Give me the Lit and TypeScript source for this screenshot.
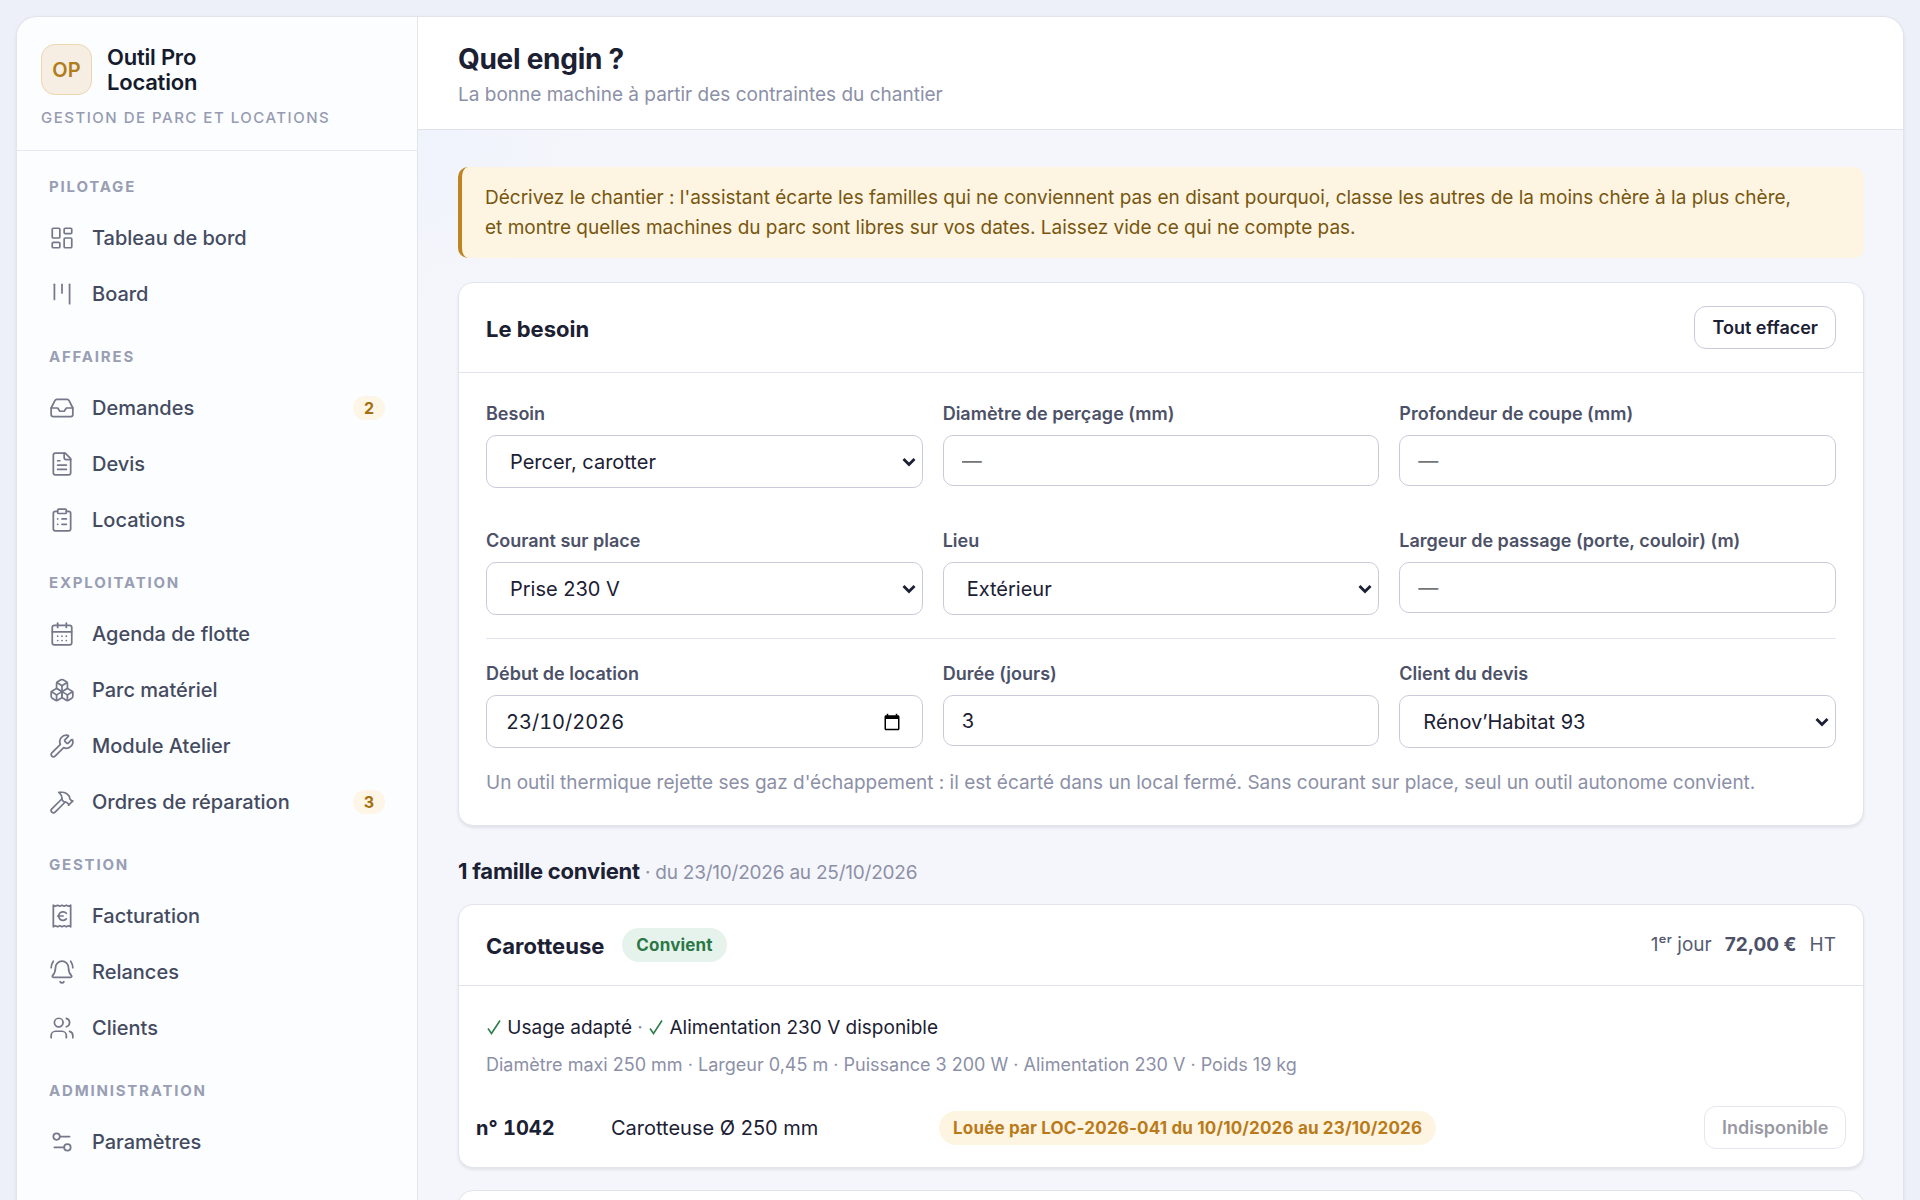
import { LitElement, html, css, svg } from "lit";
import { customElement, property } from "lit/decorators.js";

const ICONS: Record<string, unknown> = {
  dashboard: svg`<rect width="7" height="9" x="3" y="3" rx="1"/><rect width="7" height="5" x="14" y="3" rx="1"/><rect width="7" height="9" x="14" y="12" rx="1"/><rect width="7" height="5" x="3" y="16" rx="1"/>`,
  board: svg`<path d="M5 3v14"/><path d="M12 3v8"/><path d="M19 3v18"/>`,
  inbox: svg`<polyline points="22 12 16 12 14 15 10 15 8 12 2 12"/><path d="M5.45 5.11 2 12v6a2 2 0 0 0 2 2h16a2 2 0 0 0 2-2v-6l-3.45-6.89A2 2 0 0 0 16.76 4H7.24a2 2 0 0 0-1.79 1.11z"/>`,
  file: svg`<path d="M15 2H6a2 2 0 0 0-2 2v16a2 2 0 0 0 2 2h12a2 2 0 0 0 2-2V7Z"/><path d="M14 2v4a2 2 0 0 0 2 2h4"/><path d="M10 9H8"/><path d="M16 13H8"/><path d="M16 17H8"/>`,
  clipboard: svg`<rect width="8" height="4" x="8" y="2" rx="1"/><path d="M16 4h2a2 2 0 0 1 2 2v14a2 2 0 0 1-2 2H6a2 2 0 0 1-2-2V6a2 2 0 0 1 2-2h2"/><path d="M12 11h4"/><path d="M12 16h4"/><path d="M8 11h.01"/><path d="M8 16h.01"/>`,
  calendar: svg`<path d="M8 2v4"/><path d="M16 2v4"/><rect width="18" height="18" x="3" y="4" rx="2"/><path d="M3 10h18"/><path d="M8 14h.01"/><path d="M12 14h.01"/><path d="M16 14h.01"/><path d="M8 18h.01"/><path d="M12 18h.01"/><path d="M16 18h.01"/>`,
  boxes: svg`<path d="M2.97 12.92A2 2 0 0 0 2 14.63v3.24a2 2 0 0 0 .97 1.71l3 1.8a2 2 0 0 0 2.06 0L12 19v-5.5l-5-3-4.03 2.42Z"/><path d="m7 16.5-4.74-2.85"/><path d="m7 16.5 5-3"/><path d="M7 16.5v5.17"/><path d="M12 13.5V19l3.97 2.38a2 2 0 0 0 2.06 0l3-1.8a2 2 0 0 0 .97-1.71v-3.24a2 2 0 0 0-.97-1.71L17 10.5l-5 3Z"/><path d="m17 16.5-5-3"/><path d="m17 16.5 4.74-2.85"/><path d="M17 16.5v5.17"/><path d="M7.97 4.42A2 2 0 0 0 7 6.13v4.37l5 3 5-3V6.13a2 2 0 0 0-.97-1.71l-3-1.8a2 2 0 0 0-2.06 0l-3 1.8Z"/><path d="M12 8 7.26 5.15"/><path d="m12 8 4.74-2.85"/><path d="M12 13.5V8"/>`,
  wrench: svg`<path d="M14.7 6.3a1 1 0 0 0 0 1.4l1.6 1.6a1 1 0 0 0 1.4 0l3.106-3.105c.32-.322.863-.22.983.218a6 6 0 0 1-8.259 7.057l-7.91 7.91a1 1 0 0 1-2.999-3l7.91-7.91a6 6 0 0 1 7.057-8.259c.438.12.54.662.219.984z"/>`,
  hammer: svg`<path d="m15 12-9.373 9.373a1 1 0 0 1-3.001-3L12 9"/><path d="m18 15 4-4"/><path d="m21.5 11.5-1.914-1.914A2 2 0 0 1 19 8.172v-.344a2 2 0 0 0-.586-1.414l-1.657-1.657A6 6 0 0 0 12.516 3H9l1.243 1.243A6 6 0 0 1 12 8.485V10l2 2h1.172a2 2 0 0 1 1.414.586L18.5 14.5"/>`,
  receipt: svg`<path d="M4 2v20l2-1 2 1 2-1 2 1 2-1 2 1 2-1 2 1V2l-2 1-2-1-2 1-2-1-2 1-2-1-2 1Z"/><path d="M8 12h5"/><path d="M16 9.5a4 4 0 1 0 0 5.2"/>`,
  bell: svg`<path d="M10.268 21a2 2 0 0 0 3.464 0"/><path d="M22 8c0-2.3-.8-4.3-2-6"/><path d="M3.262 15.326A1 1 0 0 0 4 17h16a1 1 0 0 0 .74-1.673C19.41 13.956 18 12.499 18 8A6 6 0 0 0 6 8c0 4.499-1.411 5.956-2.738 7.326"/><path d="M4 2C2.8 3.7 2 5.7 2 8"/>`,
  users: svg`<path d="M16 21v-2a4 4 0 0 0-4-4H6a4 4 0 0 0-4 4v2"/><path d="M16 3.128a4 4 0 0 1 0 7.744"/><path d="M22 21v-2a4 4 0 0 0-3-3.87"/><circle cx="9" cy="7" r="4"/>`,
  settings: svg`<path d="M14 17H5"/><path d="M19 7h-9"/><circle cx="17" cy="17" r="3"/><circle cx="7" cy="7" r="3"/>`,
};

interface NavItem { icon: string; label: string; count?: number; }
interface NavGroup { title: string; items: NavItem[]; }

const NAV: NavGroup[] = [
  { title: "Pilotage", items: [
    { icon: "dashboard", label: "Tableau de bord" },
    { icon: "board", label: "Board" },
  ] },
  { title: "Affaires", items: [
    { icon: "inbox", label: "Demandes", count: 2 },
    { icon: "file", label: "Devis" },
    { icon: "clipboard", label: "Locations" },
  ] },
  { title: "Exploitation", items: [
    { icon: "calendar", label: "Agenda de flotte" },
    { icon: "boxes", label: "Parc matériel" },
    { icon: "wrench", label: "Module Atelier" },
    { icon: "hammer", label: "Ordres de réparation", count: 3 },
  ] },
  { title: "Gestion", items: [
    { icon: "receipt", label: "Facturation" },
    { icon: "bell", label: "Relances" },
    { icon: "users", label: "Clients" },
  ] },
  { title: "Administration", items: [
    { icon: "settings", label: "Paramètres" },
  ] },
];

@customElement("nav-icon")
class NavIcon extends LitElement {
  @property() name = "";
  static styles = css`
    :host { display: block; flex: none; width: 26px; height: 26px; color: #747889; }
    .glyph { display: block; width: 100%; height: 100%; fill: none; stroke: currentColor; stroke-width: 1.6; stroke-linecap: round; stroke-linejoin: round; }
  `;
  render() {
    return html`<svg class="glyph" viewBox="0 0 24 24" aria-hidden="true">${ICONS[this.name]}</svg>`;
  }
}

@customElement("app-sidebar")
class AppSidebar extends LitElement {
  static styles = css`
    :host { display: block; flex: none; width: 400px; border-right: 1px solid #e2e5ec; background: #fbfdff; }
    .brand { padding: 27px 24px 21px; border-bottom: 1px solid #e5e8ee; }
    .identity { display: flex; align-items: center; gap: 15px; }
    .mark { display: flex; align-items: center; justify-content: center; box-sizing: border-box; width: 51px; height: 51px; border: 1px solid #ecd6ae; border-radius: 14px; background: #f6eee3; color: #b07d1c; font-size: 20px; font-weight: 600; }
    .name { width: 120px; font-size: 22px; line-height: 25px; font-weight: 600; letter-spacing: -0.01em; color: #151b2c; }
    .tagline { margin-top: 12px; font-size: 15px; line-height: 22px; font-weight: 500; letter-spacing: 0.1em; text-transform: uppercase; color: #969bb0; }
    .nav { display: flex; flex-direction: column; gap: 24px; padding: 24px 16px; }
    .heading { margin: 0 0 12px; padding: 0 16px; font-size: 15px; line-height: 24px; font-weight: 700; letter-spacing: 0.12em; text-transform: uppercase; color: #999eb3; }
    .list { display: flex; flex-direction: column; gap: 2px; margin: 0; padding: 0; list-style: none; }
    .item { display: flex; align-items: center; gap: 17px; height: 54px; padding: 0 16px; color: #454b5f; font-size: 20px; font-weight: 500; text-decoration: none; }
    .label { flex: 1; }
    .count { box-sizing: border-box; min-width: 32px; padding: 0 10px; border-radius: 12px; background: #fdf5e6; color: #a56e10; font-size: 16px; line-height: 24px; font-weight: 700; text-align: center; }
  `;
  render() {
    return html`
      <div class="brand">
        <div class="identity"><div class="mark">OP</div><div class="name">Outil Pro Location</div></div>
        <div class="tagline">Gestion de parc et locations</div>
      </div>
      <nav class="nav">
        ${NAV.map((g) => html`
          <section>
            <h2 class="heading">${g.title}</h2>
            <ul class="list">
              ${g.items.map((i) => html`
                <li><a class="item" href="#">
                  <nav-icon name=${i.icon}></nav-icon>
                  <span class="label">${i.label}</span>
                  ${i.count ? html`<span class="count">${i.count}</span>` : ""}
                </a></li>`)}
            </ul>
          </section>`)}
      </nav>`;
  }
}

const tick = () => html`<svg class="tick" viewBox="0 0 16 16" role="img" aria-label="Oui"><path d="M2 9.500 5.500 14.500 14 1.500"/></svg>`;

@customElement("app-root")
class AppRoot extends LitElement {
  static styles = css`
    :host { display: block; font-family: Inter, "Liberation Sans", sans-serif; color: #1b2033; }
    .page { box-sizing: border-box; height: 100vh; overflow: hidden; padding: 16px 16px 0; background: #edf0f8; }
    .frame { display: flex; box-sizing: border-box; height: 100%; overflow: hidden; border: 1px solid #e2e4ea; border-bottom: 0; border-radius: 21px 21px 0 0; background: #f5f6fb; box-shadow: 0 2px 4px rgba(30, 35, 60, 0.08); }
    .main { flex: 1; min-width: 0; }
    .top { padding: 25px 40px 21px; border-bottom: 1px solid #e0e3ea; background: #fff; }
    .title { margin: 0; font-size: 28px; line-height: 34px; font-weight: 700; letter-spacing: -0.01em; }
    .subtitle { margin: 6px 0 0; font-size: 19px; line-height: 26px; color: #8c90a7; }
    .content { padding: 37px 39px 0 40px; background: radial-gradient(circle at 0 0, #eff3fc, #f5f6fb 180px); }
    .notice { margin: 0; padding: 16px 60px 15px 23px; border-left: 4px solid #bf8422; border-radius: 10px; background: #fef4e2; color: #77570f; font-size: 19px; line-height: 30px; }
    .card { margin: 0; border: 1px solid #e2e4ec; border-radius: 15px; background: #fff; box-shadow: 0 2px 3px rgba(30, 35, 60, 0.09); }
    .card-form { margin-top: 24px; }
    .card-head { display: flex; align-items: center; box-sizing: border-box; padding: 0 27px; border-bottom: 1px solid #e2e4ec; }
    .head-form { justify-content: space-between; height: 90px; }
    .head-result { gap: 18px; height: 81px; }
    .card-title { margin: 0; padding-top: 2px; font-size: 22px; line-height: 32px; font-weight: 700; }
    .button { box-sizing: border-box; height: 43px; padding: 0 17px; border: 1px solid #c9cbdb; border-radius: 12px; background: #fff; color: #1b2033; font: 600 18px/24px Inter, sans-serif; }
    .button:disabled { opacity: 0.45; }
    .form { padding: 27px 27px 28px; }
    .row { display: grid; grid-template-columns: repeat(3, 1fr); gap: 20px; align-items: start; }
    .row-next { margin-top: 39px; }
    .row-dates { margin-top: 23px; padding-top: 21px; border-top: 1px solid #e2e4ec; }
    .field { display: flex; flex-direction: column; gap: 8px; min-width: 0; }
    .field-label { font-size: 18px; line-height: 27px; font-weight: 600; color: #4c5168; }
    .control { box-sizing: border-box; width: 100%; height: 51px; margin: 0; padding: 0 18px; border: 1px solid #c9cbdb; border-radius: 10px; background: #fff; color: #1b2033; font: 400 20px/24px Inter, sans-serif; }
    .tall { height: 53px; }
    .control::placeholder { color: #757575; }
    .number { appearance: textfield; }
    .select { appearance: none; padding: 0 30px 0 23px; background: #fff url("data:image/svg+xml,%3Csvg xmlns='http://www.w3.org/2000/svg' width='14' height='10' viewBox='0 0 14 10'%3E%3Cpath d='M1.5 2 7 7.500 12.500 2' fill='none' stroke='%231b2033' stroke-width='2.800'/%3E%3C/svg%3E") right 6px center no-repeat; }
    .date { display: flex; align-items: center; padding: 0 21px 0 19px; }
    .date-text { flex: 1; min-width: 0; padding: 0; border: 0; outline: 0; background: none; color: inherit; font: inherit; font-variant-numeric: tabular-nums; }
    .picker { display: block; padding: 0; border: 0; background: none; color: #000; }
    .picker-icon { display: block; width: 18px; height: 18px; }
    .hint { margin: 21px 0 0; font-size: 19px; line-height: 28px; color: #8c90a7; }
    .results-title { margin: 29px 0 15px; font-size: 22px; line-height: 32px; font-weight: 700; letter-spacing: -0.01em; }
    .period { font-size: 19px; font-weight: 400; color: #8c90a7; }
    .pill { display: inline-block; padding: 0 14px; border-radius: 17px; font-size: 17px; line-height: 34px; font-weight: 700; letter-spacing: 0.01em; }
    .pill-ok { background: #e6f3ec; color: #2b7747; }
    .pill-busy { background: #fef4e2; color: #b97b19; }
    .price { display: flex; gap: 13px; margin-left: auto; font-size: 19px; line-height: 28px; color: #565b71; }
    .amount { font-weight: 700; color: #4c5168; }
    .reasons { margin: 28px 27px 0; font-size: 19px; line-height: 28px; }
    .tick { width: 16px; height: 16px; vertical-align: -1px; fill: none; stroke: #2f7d4d; stroke-width: 1.6; }
    .dot { color: #8c90a7; }
    .specs { margin: 9px 27px 0; font-size: 18px; line-height: 28px; color: #8c90a7; }
    .machines { width: 100%; margin: 9px 0 0; border-collapse: collapse; table-layout: fixed; font-size: 20px; line-height: 28px; text-align: left; }
    .machines th, .machines td { height: 43px; padding: 18px 17px; }
    .machines .c-number { width: 101px; font-weight: 700; font-variant-numeric: tabular-nums; }
    .machines .c-model { width: 294px; }
    .machines .c-action { width: 142px; text-align: right; }
    .card-next { margin-top: 22px; height: 80px; }
  `;

  render() {
    return html`
      <div class="page"><div class="frame">
        <app-sidebar></app-sidebar>
        <main class="main">
          <header class="top">
            <h1 class="title">Quel engin ?</h1>
            <p class="subtitle">La bonne machine à partir des contraintes du chantier</p>
          </header>
          <div class="content">
            <p class="notice">Décrivez le chantier : l'assistant écarte les familles qui ne conviennent pas en disant pourquoi, classe les autres de la moins chère à la plus chère, et montre quelles machines du parc sont libres sur vos dates. Laissez vide ce qui ne compte pas.</p>

            <section class="card card-form">
              <div class="card-head head-form">
                <h2 class="card-title">Le besoin</h2>
                <button class="button" type="button">Tout effacer</button>
              </div>
              <form class="form">
                <div class="row">
                  <div class="field"><label class="field-label" for="need">Besoin</label>
                    <select class="control tall select" id="need"><option>Percer, carotter</option></select></div>
                  <div class="field"><label class="field-label" for="diameter">Diamètre de perçage (mm)</label>
                    <input class="control number" id="diameter" type="number" placeholder="—"></div>
                  <div class="field"><label class="field-label" for="depth">Profondeur de coupe (mm)</label>
                    <input class="control number" id="depth" type="number" placeholder="—"></div>
                </div>
                <div class="row row-next">
                  <div class="field"><label class="field-label" for="power">Courant sur place</label>
                    <select class="control tall select" id="power"><option>Prise 230 V</option></select></div>
                  <div class="field"><label class="field-label" for="place">Lieu</label>
                    <select class="control tall select" id="place"><option>Extérieur</option></select></div>
                  <div class="field"><label class="field-label" for="width">Largeur de passage (porte, couloir) (m)</label>
                    <input class="control number" id="width" type="number" placeholder="—"></div>
                </div>
                <div class="row row-dates">
                  <div class="field"><label class="field-label" for="start">Début de location</label>
                    <div class="control tall date">
                      <input class="date-text" id="start" type="text" inputmode="numeric" value="23/10/2026">
                      <button class="picker" type="button" aria-label="Calendrier">
                        <svg class="picker-icon" viewBox="0 0 24 24" aria-hidden="true"><path fill="currentColor" d="M20 3h-1V1h-2v2H7V1H5v2H4c-1.1 0-2 .9-2 2v16c0 1.1.9 2 2 2h16c1.1 0 2-.9 2-2V5c0-1.1-.9-2-2-2zm0 18H4V8h16v13z"/></svg>
                      </button>
                    </div></div>
                  <div class="field"><label class="field-label" for="days">Durée (jours)</label>
                    <input class="control number" id="days" type="number" value="3"></div>
                  <div class="field"><label class="field-label" for="client">Client du devis</label>
                    <select class="control tall select" id="client"><option>Rénov’Habitat 93</option></select></div>
                </div>
                <p class="hint">Un outil thermique rejette ses gaz d'échappement : il est écarté dans un local fermé. Sans courant sur place, seul un outil autonome convient.</p>
              </form>
            </section>

            <h2 class="results-title">1 famille convient <span class="period">· du 23/10/2026 au 25/10/2026</span></h2>

            <article class="card">
              <div class="card-head head-result">
                <h3 class="card-title">Carotteuse</h3>
                <span class="pill pill-ok">Convient</span>
                <div class="price"><span>1ᵉʳ jour</span><strong class="amount">72,00 €</strong><span>HT</span></div>
              </div>
              <p class="reasons">${tick()} Usage adapté <span class="dot">·</span> ${tick()} Alimentation 230 V disponible</p>
              <p class="specs">Diamètre maxi 250 mm · Largeur 0,45 m · Puissance 3 200 W · Alimentation 230 V · Poids 19 kg</p>
              <table class="machines">
                <tbody><tr>
                  <th class="c-number" scope="row">n° 1042</th>
                  <td class="c-model">Carotteuse Ø 250 mm</td>
                  <td><span class="pill pill-busy">Louée par LOC-2026-041 du 10/10/2026 au 23/10/2026</span></td>
                  <td class="c-action"><button class="button" type="button" disabled>Indisponible</button></td>
                </tr></tbody>
              </table>
            </article>
            <div class="card card-next"></div>
          </div>
        </main>
      </div></div>`;
  }
}
